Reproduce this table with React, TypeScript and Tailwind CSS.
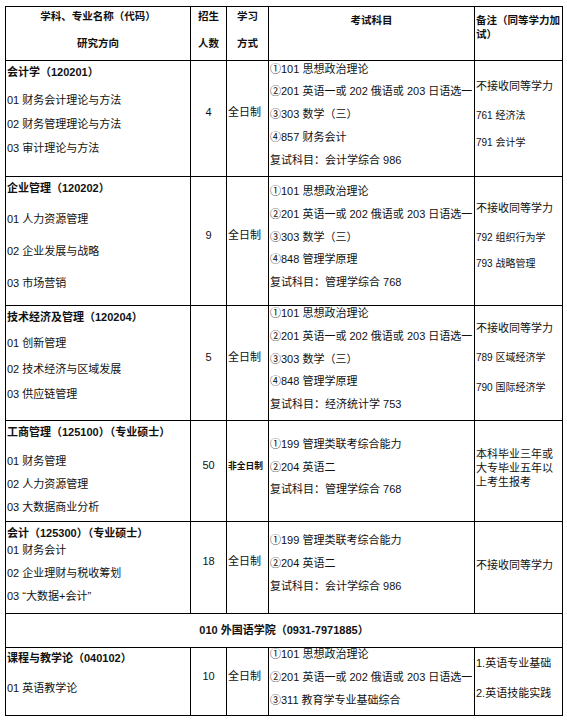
const font = { fontFamily: '"Liberation Sans", "Noto Sans CJK SC", sans-serif' };

type Row = {
  title: string;
  items: string[];
  height: string;
  itemMt: string;
  itemGap: string;
  count: string;
  mode: string;
  modeSmall?: boolean;
  exams: string[];
  remark: React.ReactNode;
};

function Exams({ lines }: { lines: string[] }) {
  return (
    <div className="flex flex-col gap-[6.75px] -mt-[9px]">
      {lines.map((l) => (
        <div key={l} className="leading-[16px] whitespace-nowrap">
          {l}
        </div>
      ))}
    </div>
  );
}

const rows: Row[] = [
  {
    title: '会计学（120201）',
    items: ['01 财务会计理论与方法', '02 财务管理理论与方法', '03 审计理论与方法'],
    height: 'h-[116px]',
    itemMt: 'mt-[12px]',
    itemGap: 'gap-[8px]',
    count: '4',
    mode: '全日制',
    exams: ['①101 思想政治理论', '②201 英语一或 202 俄语或 203 日语选一', '③303 数学（三）', '④857 财务会计', '复试科目：会计学综合 986'],
    remark: (
      <div className="flex flex-col pt-[17px]">
        <div className="leading-[16px] text-[11px]">不接收同等学力</div>
        <div className="mt-[14px] leading-[16px] text-[10px]">761 经济法</div>
        <div className="mt-[11px] leading-[16px] text-[10px]">791 会计学</div>
      </div>
    ),
  },
  {
    title: '企业管理（120202）',
    items: ['01 人力资源管理', '02 企业发展与战略', '03 市场营销'],
    height: 'h-[129px]',
    itemMt: 'mt-[15px]',
    itemGap: 'gap-[16px]',
    count: '9',
    mode: '全日制',
    exams: ['①101 思想政治理论', '②201 英语一或 202 俄语或 203 日语选一', '③303 数学（三）', '④848 管理学原理', '复试科目：管理学综合 768'],
    remark: (
      <div className="flex flex-col pt-[23px]">
        <div className="leading-[16px] text-[11px]">不接收同等学力</div>
        <div className="mt-[14px] leading-[16px] text-[10px]">792 组织行为学</div>
        <div className="mt-[10px] leading-[16px] text-[10px]">793 战略管理</div>
      </div>
    ),
  },
  {
    title: '技术经济及管理（120204）',
    items: ['01 创新管理', '02 技术经济与区域发展', '03 供应链管理'],
    height: 'h-[115px]',
    itemMt: 'mt-[10px]',
    itemGap: 'gap-[9.5px]',
    count: '5',
    mode: '全日制',
    exams: ['①101 思想政治理论', '②201 英语一或 202 俄语或 203 日语选一', '③303 数学（三）', '④848 管理学原理', '复试科目：经济统计学 753'],
    remark: (
      <div className="flex flex-col pt-[14px]">
        <div className="leading-[16px] text-[11px]">不接收同等学力</div>
        <div className="mt-[14px] leading-[16px] text-[10px]">789 区域经济学</div>
        <div className="mt-[14px] leading-[16px] text-[10px]">790 国际经济学</div>
      </div>
    ),
  },
  {
    title: '工商管理（125100）（专业硕士）',
    items: ['01 财务管理', '02 人力资源管理', '03 大数据商业分析'],
    height: 'h-[101px]',
    itemMt: 'mt-[13px]',
    itemGap: 'gap-[7px]',
    count: '50',
    mode: '非全日制',
    modeSmall: true,
    exams: ['①199 管理类联考综合能力', '②204 英语二', '复试科目：管理学综合 768'],
    remark: (
      <div className="flex flex-col pb-[7px] text-[11px] leading-[14px]">
        <div>本科毕业三年或</div>
        <div>大专毕业五年以</div>
        <div>上考生报考</div>
      </div>
    ),
  },
  {
    title: '会计（125300）（专业硕士）',
    items: ['01 财务会计', '02 企业理财与税收筹划', '03 “大数据+会计”'],
    height: 'h-[92px]',
    itemMt: 'mt-[1px]',
    itemGap: 'gap-[7px]',
    count: '18',
    mode: '全日制',
    exams: ['①199 管理类联考综合能力', '②204 英语二', '复试科目：会计学综合 986'],
    remark: <div className="pb-[6px] text-[11px] leading-[16px]">不接收同等学力</div>,
  },
];

const cell = 'border border-black p-0';

export default function App() {
  return (
    <div className="w-[567px] h-[721px] bg-white text-[#111] text-[11px]" style={font}>
      <table className="ml-[5px] mt-[6px] table-fixed border-collapse w-[557px]">
        <colgroup>
          <col className="w-[185px]" />
          <col className="w-[36px]" />
          <col className="w-[42px]" />
          <col className="w-[206px]" />
          <col className="w-[88px]" />
        </colgroup>
        <tbody>
          <tr className="h-[54px] font-bold text-[10.5px]">
            <td className={`${cell} align-top text-center`}>
              <div className="pt-[1px] leading-[16px]">学科、专业名称（代码）</div>
              <div className="mt-[11px] leading-[16px]">研究方向</div>
            </td>
            <td className={`${cell} align-top text-center`}>
              <div className="pt-[1px] leading-[16px]">招生</div>
              <div className="mt-[11px] leading-[16px]">人数</div>
            </td>
            <td className={`${cell} align-top text-center`}>
              <div className="pt-[1px] leading-[16px]">学习</div>
              <div className="mt-[11px] leading-[16px]">方式</div>
            </td>
            <td className={`${cell} align-top text-center`}>
              <div className="pt-[5px] leading-[16px]">考试科目</div>
            </td>
            <td className={`${cell} align-top pl-[1px]`}>
              <div className="pt-[6px] leading-[14px]">备注（同等学力加试）</div>
            </td>
          </tr>
          {rows.map((r) => (
            <tr key={r.title} className={r.height}>
              <td className={`${cell} align-top pl-[1px]`}>
                <div className="pt-[3px] leading-[16px] font-bold whitespace-nowrap">{r.title}</div>
                <div className={`flex flex-col ${r.itemMt} ${r.itemGap}`}>
                  {r.items.map((it) => (
                    <div key={it} className="leading-[16px] whitespace-nowrap">
                      {it}
                    </div>
                  ))}
                </div>
              </td>
              <td className={`${cell} align-middle text-center pb-[12px]`}>{r.count}</td>
              <td className={`${cell} align-middle pl-[1px] pb-[12px] whitespace-nowrap`}>
                {r.modeSmall ? <span className="font-bold text-[8.75px]">{r.mode}</span> : r.mode}
              </td>
              <td className={`${cell} align-middle pl-[1px]`}>
                <Exams lines={r.exams} />
              </td>
              <td className={`${cell} ${r.modeSmall || r.count === '18' ? 'align-middle' : 'align-top'} pl-[1px]`}>
                {r.remark}
              </td>
            </tr>
          ))}
          <tr className="h-[34px]">
            <td colSpan={5} className={`${cell} align-middle text-center font-bold`}>
              010 外国语学院（0931-7971885）
            </td>
          </tr>
          <tr className="h-[68px]">
            <td className={`${cell} align-top pl-[1px]`}>
              <div className="pt-[2px] leading-[16px] font-bold">课程与教学论（040102）</div>
              <div className="mt-[14px] leading-[16px]">01 英语教学论</div>
            </td>
            <td className={`${cell} align-middle text-center pb-[10px]`}>10</td>
            <td className={`${cell} align-middle pl-[1px] pb-[10px]`}>全日制</td>
            <td className={`${cell} align-middle pl-[1px]`}>
              <Exams lines={['①101 思想政治理论', '②201 英语一或 202 俄语或 203 日语选一', '③311 教育学专业基础综合']} />
            </td>
            <td className={`${cell} align-top pl-[1px]`}>
              <div className="pt-[7px] leading-[16px]">1.英语专业基础</div>
              <div className="mt-[14px] leading-[16px]">2.英语技能实践</div>
            </td>
          </tr>
        </tbody>
      </table>
    </div>
  );
}
